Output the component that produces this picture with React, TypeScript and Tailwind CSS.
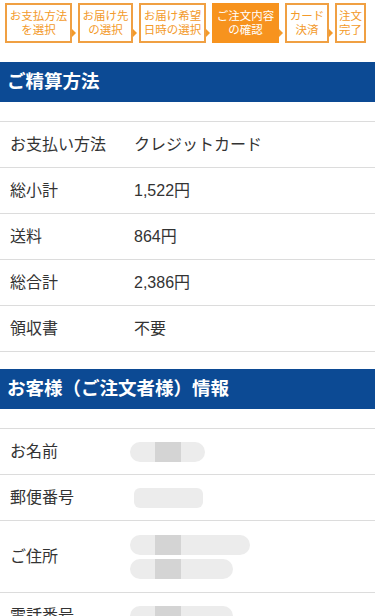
import React from "react";

const steps: { t: string[]; w: string; active?: boolean }[] = [
  { t: ["お支払方法", "を選択"], w: "w-[67px]" },
  { t: ["お届け先", "の選択"], w: "w-[55px]" },
  { t: ["お届け希望", "日時の選択"], w: "w-[67px]" },
  { t: ["ご注文内容", "の確認"], w: "w-[67px]", active: true },
  { t: ["カード", "決済"], w: "w-[44px]" },
  { t: ["注文", "完了"], w: "w-[31px]" },
];

function Arrow() {
  return (
    <div className="w-[6px] flex items-center justify-start">
      <div className="w-0 h-0 border-t-[4px] border-b-[4px] border-l-[4px] border-t-transparent border-b-transparent border-l-[#f39a2a]" />
    </div>
  );
}

function Blur({ w, dark = true }: { w: string; dark?: boolean }) {
  return (
    <div className={`${w} h-[20px] rounded-full bg-[#ececec] flex overflow-hidden`}>
      <div className="w-[25px]" />
      {dark && <div className="w-[26px] bg-[#d4d4d4]" />}
    </div>
  );
}

function Row({ label, children, h = "h-[46px]" }: { label: string; children: React.ReactNode; h?: string }) {
  return (
    <div className={`${h} flex items-center border-b border-[#dcdcdc] text-[16px] text-[#333]`}>
      <div className="w-[134px] pl-[10px] shrink-0">{label}</div>
      <div className="flex-1">{children}</div>
    </div>
  );
}

function Header({ title }: { title: string }) {
  return (
    <div className="h-[40px] bg-[#0c4a94] flex items-center pl-[7px] text-white text-[18.5px] font-bold">
      {title}
    </div>
  );
}

export default function App() {
  return (
    <div
      className="w-[375px] h-[616px] overflow-hidden bg-white"
      style={{ fontFamily: '"Liberation Sans", "Noto Sans CJK JP", sans-serif' }}
    >
      <div className="h-[62px] pt-[3px] pl-[5px] flex items-start">
        {steps.map((s, i) => (
          <React.Fragment key={i}>
            <div
              className={`${s.w} h-[40px] border-[2px] border-[#f0a043] flex flex-col items-center justify-center text-[11.5px] leading-[14px] ${
                s.active ? "bg-[#f7931e] text-white border-[#f7931e]" : "text-[#f39a2a] bg-white"
              }`}
            >
              <span className="whitespace-nowrap">{s.t[0]}</span>
              <span className="whitespace-nowrap">{s.t[1]}</span>
            </div>
            {i < steps.length - 1 && <div className="self-stretch flex items-center"><Arrow /></div>}
          </React.Fragment>
        ))}
      </div>

      <Header title="ご精算方法" />
      <div className="h-[19px]" />
      <div className="border-t border-[#dcdcdc]">
        <Row label="お支払い方法">クレジットカード</Row>
        <Row label="総小計">1,522円</Row>
        <Row label="送料">864円</Row>
        <Row label="総合計">2,386円</Row>
        <Row label="領収書">不要</Row>
      </div>
      <div className="h-[17px]" />

      <Header title="お客様（ご注文者様）情報" />
      <div className="h-[19px]" />
      <div className="border-t border-[#dcdcdc]">
        <Row label="お名前">
          <div className="-ml-[4px]"><Blur w="w-[75px]" /></div>
        </Row>
        <Row label="郵便番号">
          <div className="w-[69px] h-[20px] rounded-[6px] bg-[#ececec]" />
        </Row>
        <Row label="ご住所" h="h-[72px]">
          <div className="-ml-[4px] flex flex-col gap-[4px]">
            <Blur w="w-[120px]" />
            <Blur w="w-[103px]" />
          </div>
        </Row>
        <Row label="電話番号">
          <div className="-ml-[4px]"><Blur w="w-[103px]" /></div>
        </Row>
      </div>
    </div>
  );
}
